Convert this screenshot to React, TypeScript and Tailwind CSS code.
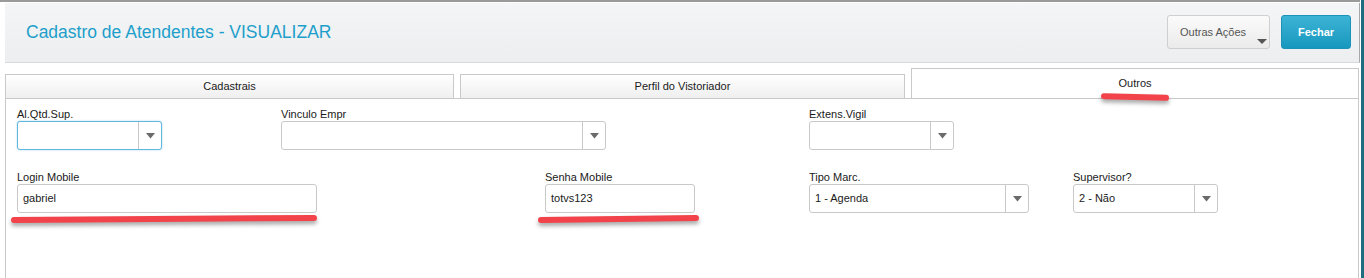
import React from "react";

function Arrow() {
  return (
    <svg width="9" height="6" viewBox="0 0 9 6" className="block">
      <polygon points="0,0 9,0 4.5,5.5" fill="#6a6a6a" />
    </svg>
  );
}

function Select({ width, value, focused }: { width: number; value?: string; focused?: boolean }) {
  return (
    <div
      style={{ width }}
      className={
        "h-[29px] flex items-stretch rounded-[3px] bg-white border " +
        (focused ? "border-[#63b6dc] shadow-[0_0_2px_rgba(99,182,220,0.6)]" : "border-[#c9c9c9]")
      }
    >
      <div className="flex-1 flex items-center pl-[5px] text-[11px] text-[#1a1a1a]">{value}</div>
      <div className="w-[23px] border-l border-[#c9c9c9] flex items-center justify-center">
        <Arrow />
      </div>
    </div>
  );
}

function Input({ width, value }: { width: number; value: string }) {
  return (
    <div
      style={{ width }}
      className="h-[29px] flex items-center pl-[5px] rounded-[3px] bg-white border border-[#c9c9c9] text-[11px] text-[#1a1a1a]"
    >
      {value}
    </div>
  );
}

function Field({ label, children, className }: { label: string; children: React.ReactNode; className?: string }) {
  return (
    <div className={className}>
      <div className="text-[11px] leading-[13px] text-[#1a1a1a] whitespace-nowrap">{label}</div>
      {children}
    </div>
  );
}

function RedMark({ className }: { className: string }) {
  return (
    <div
      className={
        "absolute h-[6px] rounded-full bg-[#f2434b] shadow-[0_3px_4px_rgba(0,0,0,0.35)] " + className
      }
    />
  );
}

export default function App() {
  return (
    <div
      className="relative w-[1364px] h-[278px] overflow-hidden bg-white flex"
      style={{ fontFamily: '"Liberation Sans", Arial, sans-serif' }}
    >
      <div className="w-[1361px] flex flex-col">
        <div className="h-[2px] w-[1360px] bg-[#9a9a9a]" />
        <div className="ml-[5px] w-[1355px] flex flex-col">
          {/* Header */}
          <div className="mt-[1px] h-[60px] flex items-center justify-between bg-gradient-to-b from-[#f4f5f6] to-[#eceef0] border-b border-[#d8d9db] border-r border-r-[#a8a8a8]">
            <div className="pl-[21px] pb-[1px] text-[17.5px] leading-[20px] text-[#1d9fcb] whitespace-nowrap">
              Cadastro de Atendentes - VISUALIZAR
            </div>
            <div className="flex items-center gap-[11px] pr-[8px] pb-[1px]">
              <div className="relative w-[103px] h-[34px] rounded-[3px] border border-[#cfcfcf] bg-gradient-to-b from-[#fbfbfb] to-[#ebebeb] flex items-center pl-[12px] text-[11px] text-[#555]">
                Outras Ações
                <svg width="10" height="5" viewBox="0 0 10 5" className="absolute right-[2px] bottom-[4px]">
                  <polygon points="0,0 10,0 5,5" fill="#555" />
                </svg>
              </div>
              <div className="w-[70px] h-[34px] rounded-[3px] border border-[#1b92b7] bg-gradient-to-b from-[#3bb3d5] to-[#1598be] flex items-center justify-center text-[11px] font-bold text-white">
                Fechar
              </div>
            </div>
          </div>

          {/* Tabs */}
          <div className="mt-[5px] w-[1354px] h-[30px] flex items-end gap-[6px]">
            <div className="w-[449px] h-[24px] border border-b-0 border-[#c9c9c9] bg-gradient-to-b from-[#ffffff] to-[#efefef] flex items-center justify-center text-[11px] text-[#1a1a1a]">
              Cadastrais
            </div>
            <div className="w-[445px] h-[24px] border border-b-0 border-[#c9c9c9] bg-gradient-to-b from-[#ffffff] to-[#efefef] flex items-center justify-center text-[11px] text-[#1a1a1a]">
              Perfil do Vistoriador
            </div>
            <div className="w-[448px] h-[30px] border border-b-0 border-[#c9c9c9] bg-white flex items-center justify-center pb-[1px] text-[11px] text-[#1a1a1a]">
              Outros
            </div>
          </div>

          {/* Panel */}
          <div className="w-[1354px] h-[180px] border border-b-0 border-[#c9c9c9] pl-[11px] pt-[9px]">
            <div className="grid grid-cols-[repeat(5,264px)]">
              <Field label="Al.Qtd.Sup." className="col-start-1">
                <Select width={145} focused />
              </Field>
              <Field label="Vinculo Empr" className="col-start-2">
                <Select width={325} />
              </Field>
              <Field label="Extens.Vigil" className="col-start-4">
                <Select width={145} />
              </Field>
            </div>
            <div className="grid grid-cols-[repeat(5,264px)] mt-[21px]">
              <Field label="Login Mobile" className="col-start-1">
                <Input width={300} value="gabriel" />
              </Field>
              <Field label="Senha Mobile" className="col-start-3">
                <Input width={150} value="totvs123" />
              </Field>
              <Field label="Tipo Marc." className="col-start-4">
                <Select width={220} value="1 - Agenda" />
              </Field>
              <Field label="Supervisor?" className="col-start-5">
                <Select width={145} value="2 - Não" />
              </Field>
            </div>
          </div>
        </div>
      </div>
      <div className="w-[3px] h-full bg-[#1c6e80]" />

      {/* annotation marks */}
      <RedMark className="left-[11px] top-[216px] w-[306px] -rotate-[0.4deg]" />
      <RedMark className="left-[538px] top-[216px] w-[161px] -rotate-[0.8deg]" />
      <RedMark className="left-[1101px] top-[94px] w-[68px] rotate-[1.5deg]" />
    </div>
  );
}
